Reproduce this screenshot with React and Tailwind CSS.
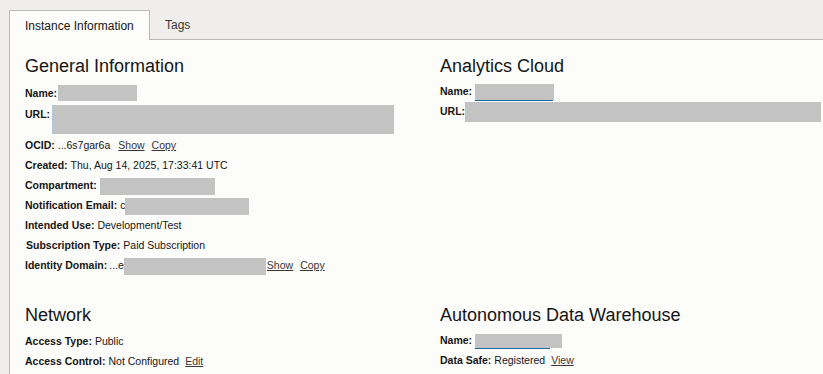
import React from 'react';

const Redact = ({ className = "" }) => (
  <span className={`inline-block bg-[#c3c3c3] ${className}`}></span>
);

const Row = ({ label, children, className = "" }) => (
  <div className={`flex items-center h-[20px] text-[10.5px] text-[#161513] whitespace-nowrap ${className}`}>
    <span className="font-bold">{label}</span>
    {children}
  </div>
);

const LinkText = ({ children, className = "" }) => (
  <span className={`underline text-[#3a3632] ${className}`}>{children}</span>
);

const Heading = ({ children }) => (
  <h2 className="text-[18px] leading-[24px] text-[#161513]">{children}</h2>
);

export default function App() {
  return (
    <div className="w-[823px] h-[374px] overflow-hidden bg-[#efeeec] font-['Liberation_Sans',Arial,sans-serif]">
      {/* Tabs */}
      <div className="flex items-end h-[39px] pl-[9px]">
        <div className="relative z-10 -mb-px flex items-center w-[141px] h-[30px] pl-[15px] bg-[#fcfcfb] border border-b-0 border-[#b9b9b9] text-[12px] text-[#161513]">
          Instance Information
        </div>
        <div className="flex items-center h-[29px] pl-[15px] text-[12px] text-[#3a3632]">Tags</div>
      </div>

      {/* Panel */}
      <div className="ml-[9px] h-[335px] bg-[#fcfcfb] border-l border-t border-[#b9b9b9] pl-[15px] pt-[14px]">
        <div className="grid grid-cols-[415px_1fr]">
          {/* General Information */}
          <div>
            <Heading>General Information</Heading>
            <div className="mt-[6px]">
              <Row label="Name:">
                <Redact className="ml-[1px] w-[79px] h-[16px] -mt-[3px]" />
              </Row>
              <div className="flex items-start h-[32px] text-[10.5px] text-[#161513]">
                <span className="font-bold leading-[20px]">URL:</span>
                <span className="ml-[2px] mt-[1px] flex">
                  <span className="w-px h-[29px] bg-[#3d7fb0] opacity-40"></span>
                  <Redact className="w-[341px] h-[29px]" />
                </span>
              </div>
              <Row label="OCID:">
                <span className="ml-[3px]">...6s7gar6a</span>
                <LinkText className="ml-[8px]">Show</LinkText>
                <LinkText className="ml-[7px]">Copy</LinkText>
              </Row>
              <Row label="Created:">
                <span className="ml-[3px]">Thu, Aug 14, 2025, 17:33:41 UTC</span>
              </Row>
              <Row label="Compartment:">
                <Redact className="ml-[3px] w-[115px] h-[17px]" />
              </Row>
              <Row label="Notification Email:">
                <span className="ml-[3px]">c</span>
                <Redact className="w-[124px] h-[17px]" />
              </Row>
              <Row label="Intended Use:">
                <span className="ml-[3px]">Development/Test</span>
              </Row>
              <Row label="Subscription Type:" className="pl-px">
                <span className="ml-[3px]">Paid Subscription</span>
              </Row>
              <Row label="Identity Domain:">
                <span className="ml-[2px]">...e</span>
                <Redact className="w-[142px] h-[17px]" />
                <LinkText className="ml-px">Show</LinkText>
                <LinkText className="ml-[7px]">Copy</LinkText>
              </Row>
            </div>
          </div>

          {/* Analytics Cloud */}
          <div>
            <Heading>Analytics Cloud</Heading>
            <div className="mt-[4px]">
              <Row label="Name:">
                <span className="ml-[3px] flex flex-col">
                  <Redact className="w-[79px] h-[16px]" />
                  <span className="w-[78px] h-px bg-[#1b6a9a]"></span>
                </span>
              </Row>
              <Row label="URL:">
                <Redact className="w-[356px] h-[20px]" />
              </Row>
            </div>
          </div>

          {/* Network */}
          <div className="pt-[27px]">
            <Heading>Network</Heading>
            <div className="mt-[5px]">
              <Row label="Access Type:">
                <span className="ml-[3px]">Public</span>
              </Row>
              <Row label="Access Control:">
                <span className="ml-[3px]">Not Configured</span>
                <LinkText className="ml-[6px]">Edit</LinkText>
              </Row>
            </div>
          </div>

          {/* Autonomous Data Warehouse */}
          <div className="pt-[27px]">
            <Heading>Autonomous Data Warehouse</Heading>
            <div className="mt-[4px]">
              <Row label="Name:">
                <span className="ml-[3px] flex flex-col">
                  <Redact className="w-[87px] h-[14px]" />
                  <span className="w-[75px] h-px bg-[#1b6a9a]"></span>
                </span>
              </Row>
              <Row label="Data Safe:">
                <span className="ml-[3px]">Registered</span>
                <LinkText className="ml-[6px]">View</LinkText>
              </Row>
            </div>
          </div>
        </div>
      </div>
    </div>
  );
}
